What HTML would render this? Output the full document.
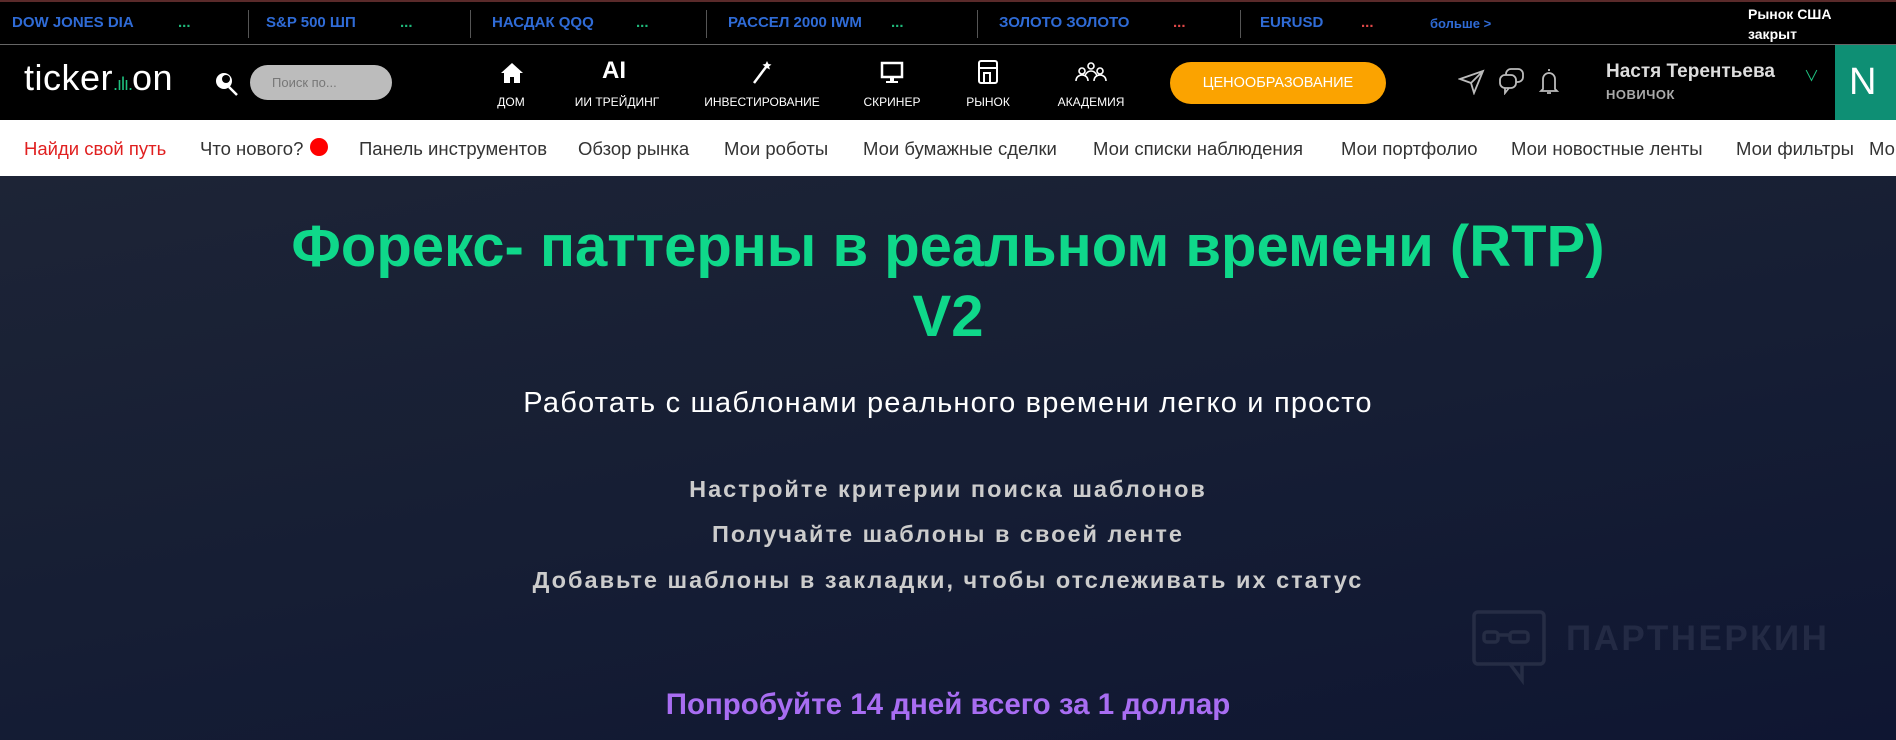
<!DOCTYPE html>
<html><head><meta charset="utf-8"><style>
*{margin:0;padding:0;box-sizing:border-box}
body{width:1896px;height:740px;overflow:hidden;font-family:"Liberation Sans","Noto Sans CJK SC",sans-serif;background:#141b30;position:relative}
.a{position:absolute;white-space:nowrap}
#tk{position:absolute;left:0;top:0;width:1896px;height:45px;background:#000;border-top:2px solid #5a2a2a;border-bottom:1px solid #666}
#tk .t{color:#2f6bd6;font-weight:bold;font-size:15px;top:12px}
#tk .d{font-weight:bold;font-size:15px;top:12px}
#tk .s{top:8px;width:1px;height:28px;background:#555}
#nav{position:absolute;left:0;top:45px;width:1896px;height:75px;background:#000}
.ni{color:#fff;font-size:12px;text-align:center;width:120px;top:50px}
#sub{position:absolute;left:0;top:120px;width:1896px;height:56px;background:#fff}
#sub .a{top:18px;font-size:18.5px;color:#333}
#hero{position:absolute;left:0;top:176px;width:1896px;height:564px;background:linear-gradient(170deg,#1d2436 0%,#161e34 50%,#0f1632 100%)}
.c{position:absolute;left:0;width:1896px;text-align:center;white-space:nowrap}
</style></head><body>
<div id="tk">
<span class="a t" style="left:12px">DOW JONES DIA</span><span class="a d" style="left:178px;color:#1fb87a">...</span>
<span class="a s" style="left:248px"></span>
<span class="a t" style="left:266px">S&amp;P 500 ШП</span><span class="a d" style="left:400px;color:#1fb87a">...</span>
<span class="a s" style="left:470px"></span>
<span class="a t" style="left:492px">НАСДАК QQQ</span><span class="a d" style="left:636px;color:#1fb87a">...</span>
<span class="a s" style="left:706px"></span>
<span class="a t" style="left:728px">РАССЕЛ 2000 IWM</span><span class="a d" style="left:891px;color:#1fb87a">...</span>
<span class="a s" style="left:977px"></span>
<span class="a t" style="left:999px">ЗОЛОТО ЗОЛОТО</span><span class="a d" style="left:1173px;color:#e04848">...</span>
<span class="a s" style="left:1240px"></span>
<span class="a t" style="left:1260px">EURUSD</span><span class="a d" style="left:1361px;color:#e04848">...</span>
<span class="a t" style="left:1430px;font-size:13px;top:14px">больше &gt;</span>
<span class="a" style="left:1748px;top:2px;color:#fff;font-weight:bold;font-size:14px;line-height:20px">Рынок США<br>закрыт</span>
</div>
<div id="nav">
<span class="a" style="left:24px;top:12px;color:#fff;font-size:36px;letter-spacing:0.5px">ticker<span style="color:#1fc07f;font-size:18px;letter-spacing:-1px">.ılı.</span>on</span>
<svg class="a" style="left:212px;top:24px" width="30" height="30" viewBox="0 0 30 30"><circle cx="12" cy="12" r="8" fill="#fff"/><circle cx="14" cy="10" r="4" fill="#000"/><line x1="17" y1="18" x2="25" y2="26" stroke="#fff" stroke-width="2.5"/></svg>
<div class="a" style="left:250px;top:20px;width:142px;height:35px;border-radius:18px;background:#bcbcbc;color:#777;font-size:13px;line-height:35px;padding-left:22px">Поиск по...</div>
<svg class="a" style="left:499px;top:16px" width="26" height="24" viewBox="0 0 26 24"><path d="M13 2 L2 12 H5 V22 H11 V16 H15 V22 H21 V12 H24 Z" fill="#fff"/></svg>
<span class="a ni" style="left:451px">ДОМ</span>
<span class="a" style="left:602px;top:12px;color:#fff;font-weight:bold;font-size:24px">AI</span>
<span class="a ni" style="left:557px">ИИ ТРЕЙДИНГ</span>
<svg class="a" style="left:750px;top:14px" width="24" height="26" viewBox="0 0 24 26"><line x1="4" y1="24" x2="16" y2="8" stroke="#fff" stroke-width="2.5"/><path d="M17 2l1.5 3 3 .5-2.5 2 1 3-3-1.5-3 1.5 1-3-2.5-2 3-.5z" fill="#fff"/></svg>
<span class="a ni" style="left:702px">ИНВЕСТИРОВАНИЕ</span>
<svg class="a" style="left:880px;top:16px" width="24" height="24" viewBox="0 0 24 24"><rect x="2" y="2" width="20" height="14" fill="none" stroke="#fff" stroke-width="2.5"/><rect x="10" y="16" width="4" height="4" fill="#fff"/><rect x="6" y="20" width="12" height="2" fill="#fff"/></svg>
<span class="a ni" style="left:832px">СКРИНЕР</span>
<svg class="a" style="left:976px;top:14px" width="24" height="26" viewBox="0 0 24 26"><rect x="3" y="2" width="18" height="22" rx="2" fill="none" stroke="#fff" stroke-width="2"/><line x1="3" y1="9" x2="21" y2="9" stroke="#fff" stroke-width="2"/><rect x="8" y="14" width="6" height="10" fill="none" stroke="#fff" stroke-width="2"/></svg>
<span class="a ni" style="left:928px">РЫНОК</span>
<svg class="a" style="left:1074px;top:16px" width="34" height="22" viewBox="0 0 34 22"><g fill="none" stroke="#fff" stroke-width="1.6"><circle cx="17" cy="5" r="3"/><circle cx="8" cy="10" r="3"/><circle cx="26" cy="10" r="3"/><path d="M2 20c0-4 3-6 6-6s6 2 6 6M20 20c0-4 3-6 6-6s6 2 6 6M11 15c1-3 3-5 6-5s5 2 6 5"/></g></svg>
<span class="a ni" style="left:1031px">АКАДЕМИЯ</span>
<div class="a" style="left:1170px;top:17px;width:216px;height:42px;border-radius:21px;background:#fba300;color:#fff;font-size:14.5px;text-align:center;line-height:42px">ЦЕНООБРАЗОВАНИЕ</div>
<svg class="a" style="left:1458px;top:24px" width="28" height="26" viewBox="0 0 28 26"><path d="M2 10 L25 2 L16 24 L13 14 Z M13 14 L25 2" fill="none" stroke="#bbb" stroke-width="1.8"/></svg>
<svg class="a" style="left:1498px;top:22px" width="28" height="28" viewBox="0 0 28 28"><g fill="none" stroke="#bbb" stroke-width="1.8"><rect x="8" y="2" width="17" height="13" rx="5"/><rect x="2" y="8" width="16" height="13" rx="5" fill="#000"/><path d="M7 21v5l4-5"/></g></svg>
<svg class="a" style="left:1538px;top:22px" width="22" height="30" viewBox="0 0 22 30"><path d="M11 2v2M5 22V12a6 6 0 0 1 12 0v10l2 2H3z M9 26h4" fill="none" stroke="#bbb" stroke-width="1.8"/></svg>
<span class="a" style="left:1606px;top:16px;color:#ddd;font-weight:bold;font-size:19px">Настя Терентьева</span>
<span class="a" style="left:1606px;top:42px;color:#aaa;font-weight:bold;font-size:13px;letter-spacing:0.5px">НОВИЧОК</span>
<span class="a" style="left:1804px;top:20px;color:#1fc07f;font-size:15px">∨</span>
<div class="a" style="left:1835px;top:0;width:61px;height:75px;background:#0e8f74;color:#fff;font-size:38px;line-height:75px;padding-left:14px">N</div>
</div>
<div id="sub">
<span class="a" style="left:24px;color:#e02020">Найди свой путь</span>
<span class="a" style="left:200px">Что нового?</span>
<span class="a" style="left:310px;top:18px;width:18px;height:18px;border-radius:50%;background:#f00"></span>
<span class="a" style="left:359px">Панель инструментов</span>
<span class="a" style="left:578px">Обзор рынка</span>
<span class="a" style="left:724px">Мои роботы</span>
<span class="a" style="left:863px">Мои бумажные сделки</span>
<span class="a" style="left:1093px">Мои списки наблюдения</span>
<span class="a" style="left:1341px">Мои портфолио</span>
<span class="a" style="left:1511px">Мои новостные ленты</span>
<span class="a" style="left:1736px">Мои фильтры</span>
<span class="a" style="left:1869px">Мои</span>
</div>
<div id="hero">
<svg class="a" style="left:1470px;top:432px" width="80" height="80" viewBox="0 0 80 80"><g fill="none" stroke="#262d45" stroke-width="3.5"><rect x="4" y="4" width="70" height="52" rx="4"/><path d="M40 56 L52 72 V56"/><rect x="14" y="24" width="14" height="10" rx="3"/><rect x="40" y="24" width="18" height="10" rx="3"/><line x1="28" y1="27" x2="40" y2="27"/></g></svg>
<div class="a" style="left:1566px;top:443px;color:#232a44;font-size:35px;font-weight:bold;letter-spacing:2.5px">ПАРТНЕРКИН</div>
<div class="c" style="top:36px;color:#0fd88a;font-size:58px;font-weight:bold;line-height:70px">Форекс- паттерны в реальном времени (RTP)<br>V2</div>
<div class="c" style="top:211px;color:#fff;font-size:29px;letter-spacing:1.2px">Работать с шаблонами реального времени легко и просто</div>
<div class="c" style="top:300px;color:#ccc;font-size:23.5px;font-weight:bold;letter-spacing:2px">Настройте критерии поиска шаблонов</div>
<div class="c" style="top:345px;color:#ccc;font-size:23.5px;font-weight:bold;letter-spacing:2px">Получайте шаблоны в своей ленте</div>
<div class="c" style="top:391px;color:#ccc;font-size:23.5px;font-weight:bold;letter-spacing:2px">Добавьте шаблоны в закладки, чтобы отслеживать их статус</div>
<div class="c" style="top:512px;color:#a86df2;font-size:29.5px;font-weight:bold">Попробуйте 14 дней всего за 1 доллар</div>
</div>
</body></html>
